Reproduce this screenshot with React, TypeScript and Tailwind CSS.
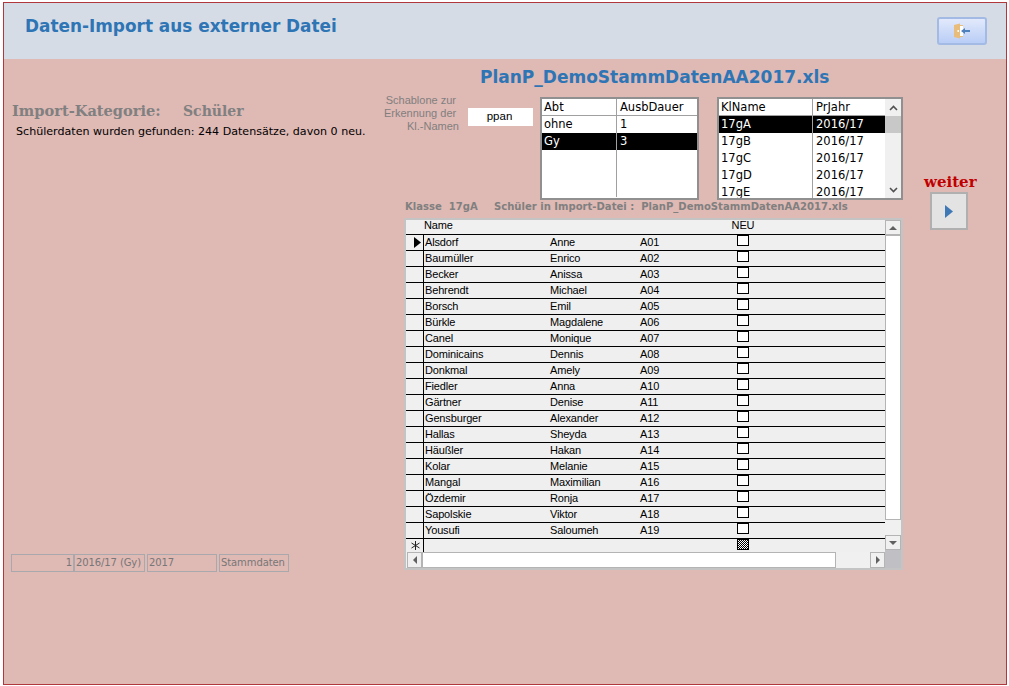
const students = [
  ["Alsdorf", "Anne", "A01"],
  ["Baumüller", "Enrico", "A02"],
  ["Becker", "Anissa", "A03"],
  ["Behrendt", "Michael", "A04"],
  ["Borsch", "Emil", "A05"],
  ["Bürkle", "Magdalene", "A06"],
  ["Canel", "Monique", "A07"],
  ["Dominicains", "Dennis", "A08"],
  ["Donkmal", "Amely", "A09"],
  ["Fiedler", "Anna", "A10"],
  ["Gärtner", "Denise", "A11"],
  ["Gensburger", "Alexander", "A12"],
  ["Hallas", "Sheyda", "A13"],
  ["Häußler", "Hakan", "A14"],
  ["Kolar", "Melanie", "A15"],
  ["Mangal", "Maximilian", "A16"],
  ["Özdemir", "Ronja", "A17"],
  ["Sapolskie", "Viktor", "A18"],
  ["Yousufi", "Saloumeh", "A19"],
];

const klassen = ["17gA", "17gB", "17gC", "17gD", "17gE"];

const Tri = ({ dir, cls = "fill-[#606060]" }: { dir: "up" | "down" | "left" | "right"; cls?: string }) => {
  const pts = {
    up: "0,6 4,2 8,6",
    down: "0,2 8,2 4,6",
    left: "6,0 6,8 2,4",
    right: "2,0 2,8 6,4",
  }[dir];
  return (
    <svg width="8" height="8" viewBox="0 0 8 8" className={cls}>
      <polygon points={pts} />
    </svg>
  );
};

const Chevron = ({ up }: { up?: boolean }) => (
  <svg width="9" height="6" viewBox="0 0 9 6" fill="none" stroke="#505050" strokeWidth="1.6">
    <path d={up ? "M1 5l3.5-3.5L8 5" : "M1 1l3.5 3.5L8 1"} />
  </svg>
);

const ScrollBtn = ({ dir, className }: { dir: "up" | "down" | "left" | "right"; className: string }) => (
  <div className={`flex shrink-0 items-center justify-center border border-[#b4b4b4] bg-[#f0f0f0] ${className}`}>
    <Tri dir={dir} />
  </div>
);

const FieldBox = ({ text, className }: { text: string; className: string }) => (
  <div className={`h-[18px] shrink-0 whitespace-nowrap border border-[#a9a9ad] px-[1px] text-[10px] leading-[15px] tracking-[-0.1px] text-[#777777] ${className}`}>
    {text}
  </div>
);

export default function App() {
  return (
    <div className="h-[686px] w-[1009px] overflow-hidden bg-white pb-[1px] pl-[3px] pr-[2px] pt-[2px] font-['DejaVu_Sans',sans-serif]">
      <div className="flex h-full flex-col border border-[#b0383c] bg-[#dfb9b4]">
        {/* Kopfbereich */}
        <div className="flex h-[56px] shrink-0 items-start justify-between bg-[#d6dce5] pl-[21px] pr-[19px]">
          <h1 className="mt-[11px] text-[16.900px] font-bold leading-[24px] text-[#2e75b6]">Daten-Import aus externer Datei</h1>
          <button className="mt-[14px] flex h-[28px] w-[50px] items-center justify-center rounded-[3px] border-2 border-[#a3bbe4] bg-gradient-to-b from-[#e2e9fb] to-[#b9cdf6]">
            <svg width="18" height="18" viewBox="0 0 18 18">
              <path d="M1 3l6-1.500 0 15-6-1.500z" fill="#e8bd7c" />
              <path d="M7 3h3v1h-3zM7 14h3v1h-3z" fill="#e8bd7c" />
              <rect x="7" y="4" width="3" height="10" fill="#ffffff" />
              <rect x="4.500" y="8" width="1.500" height="2" fill="#ffffff" />
              <path d="M17 8h-5v-2l-4 3 4 3v-2h5z" fill="#4f81bd" />
            </svg>
          </button>
        </div>

        <div className="flex flex-1">
          {/* linke Spalte */}
          <div className="flex h-[513px] w-[380px] shrink-0 flex-col pl-[7px]">
            <div className="ml-[1px] mt-[41px] flex items-baseline font-['DejaVu_Serif',serif] font-bold text-[#808080]">
              <span className="w-[171px] text-[14.600px] leading-[22px]">Import-Kategorie:</span>
              <span className="text-[14px] leading-[22px]">Schüler</span>
            </div>
            <p className="ml-[5px] mt-[2px] whitespace-nowrap text-[11.100px] leading-[16px] text-black">Schülerdaten wurden gefunden: 244 Datensätze, davon 0 neu.</p>
            <div className="mt-auto flex items-start">
              <FieldBox text="1" className="w-[63px] text-right" />
              <FieldBox text="2016/17 (Gy)" className="w-[71px]" />
              <FieldBox text="2017" className="ml-[2px] w-[70px]" />
              <FieldBox text="Stammdaten" className="ml-[2px] w-[70px]" />
            </div>
          </div>

          {/* mittlere Spalte */}
          <div className="flex w-[519px] shrink-0 flex-col">
            <h2 className="ml-[96px] mt-[6px] h-[24px] whitespace-nowrap text-[17px] font-bold leading-[24px] text-[#2e75b6]">PlanP_DemoStammDatenAA2017.xls</h2>
            <div className="mt-[8px] flex items-start">
              <div className="mt-[-3px] w-[75px] shrink-0 whitespace-nowrap text-right font-['Liberation_Sans',sans-serif] text-[11px] leading-[13px] text-[#7f7f7f]">
                <div className="pr-[3px]">Schablone zur</div>
                <div className="pr-[3px]">Erkennung der</div>
                <div>Kl.-Namen</div>
              </div>
              <div className="ml-[9px] mt-[11px] flex h-[18px] w-[65px] shrink-0 items-center justify-center bg-white pr-[2px] font-['Liberation_Sans',sans-serif] text-[11.500px]">ppan</div>

              <div className="ml-[7px] h-[103px] w-[159px] shrink-0 border-2 border-[#909090] bg-white text-[11.500px] leading-[17px]">
                <div className="flex h-[17px] border-b border-[#a0a0a0]">
                  <div className="w-[75px] border-r border-[#a0a0a0] pl-[2px]">Abt</div>
                  <div className="pl-[3px]">AusbDauer</div>
                </div>
                <div className="flex h-[17px]">
                  <div className="w-[75px] border-r border-[#a0a0a0] pl-[2px]">ohne</div>
                  <div className="pl-[3px]">1</div>
                </div>
                <div className="flex h-[17px] bg-black text-white">
                  <div className="w-[75px] border-r border-[#a0a0a0] pl-[2px]">Gy</div>
                  <div className="pl-[3px]">3</div>
                </div>
                <div className="h-[47px] w-[75px] border-r border-[#a0a0a0]" />
              </div>

              <div className="ml-[18px] flex h-[103px] w-[186px] shrink-0 overflow-hidden border-2 border-[#909090] bg-white text-[11.500px] leading-[17px]">
                <div className="w-[166px] shrink-0">
                  <div className="flex h-[17px] border-b border-[#a0a0a0]">
                    <div className="w-[94px] border-r border-[#a0a0a0] pl-[2px]">KlName</div>
                    <div className="pl-[3px]">PrJahr</div>
                  </div>
                  {klassen.map((k, i) => (
                    <div key={k} className={`flex h-[17px] ${i === 0 ? "bg-black text-white" : ""}`}>
                      <div className="w-[94px] border-r border-[#a0a0a0] pl-[2px]">{k}</div>
                      <div className="pl-[3px]">2016/17</div>
                    </div>
                  ))}
                </div>
                <div className="flex w-[16px] shrink-0 flex-col bg-[#f0f0f0]">
                  <div className="flex h-[17px] items-center justify-center"><Chevron up /></div>
                  <div className="h-[17px] bg-[#c8c8c8]" />
                  <div className="flex-1" />
                  <div className="flex h-[14px] items-center justify-center pb-[2px]"><Chevron /></div>
                </div>
              </div>
            </div>

            <div className="ml-[21px] flex h-[18px] items-start whitespace-pre text-[10.050px] font-bold leading-[14px] text-[#808080]">
              <span className="w-[89px]">Klasse  17gA</span>
              <span>Schüler in Import-Datei :  PlanP_DemoStammDatenAA2017.xls</span>
            </div>

            {/* Schüler-Tabelle */}
            <div className="ml-[20px] flex h-[352px] w-[499px] border-2 border-[#c4c4c4] bg-[#f0f0f0] font-['Liberation_Sans',sans-serif] text-[11px] tracking-[-0.15px]">
              <div className="flex w-[479px] shrink-0 flex-col">
                <div className="flex h-[14px] shrink-0 bg-[#f0f0f0] leading-[11px]">
                  <div className="w-[18px] shrink-0" />
                  <div className="w-[307px] shrink-0">Name</div>
                  <div className="w-[24px] text-center">NEU</div>
                </div>
                {students.map(([name, first, code], i) => (
                  <div key={code} className="flex h-[16px] shrink-0 border-t border-black bg-[#efefef] leading-[15px]">
                    <div className="flex w-[18px] shrink-0 items-center justify-end border-r border-black bg-[#f0f0f0] pr-[1px]">
                      {i === 0 && (
                        <svg width="8" height="11" viewBox="0 0 8 11"><polygon points="0,0 7,5.500 0,11" fill="#000000" /></svg>
                      )}
                    </div>
                    <div className="w-[126px] shrink-0 pl-[1px]">{name}</div>
                    <div className="w-[90px] shrink-0">{first}</div>
                    <div className="w-[97px] shrink-0">{code}</div>
                    <div className="h-[11px] w-[12px] border border-black bg-white" />
                  </div>
                ))}
                <div className="flex h-[14px] shrink-0 border-t border-black bg-[#efefef]">
                  <div className="flex w-[18px] shrink-0 items-center justify-end border-r border-black pr-[3px]">
                    <svg width="9" height="9" viewBox="0 0 9 9" stroke="#202020" strokeWidth="1">
                      <path d="M4.500 0v9M0.500 2l8 5M8.500 2l-8 5" />
                    </svg>
                  </div>
                  <div className="ml-[313px] h-[11px] w-[12px] border border-black bg-[repeating-conic-gradient(#000000_0_25%,#ffffff_0_50%)] bg-[length:2px_2px]" />
                </div>
                <div className="flex h-[16px] shrink-0 items-stretch pl-[1px]">
                  <ScrollBtn dir="left" className="w-[15px]" />
                  <div className="w-[414px] border border-[#b4b4b4] bg-white" />
                  <div className="flex-1" />
                  <ScrollBtn dir="right" className="w-[15px]" />
                </div>
              </div>
              <div className="flex w-[16px] shrink-0 flex-col">
                <ScrollBtn dir="up" className="h-[15px]" />
                <div className="h-[285px] shrink-0 border border-[#b4b4b4] bg-white" />
                <div className="h-[15px] shrink-0" />
                <ScrollBtn dir="down" className="h-[15px]" />
                <div className="flex-1 bg-[#c0c0c4]" />
              </div>
            </div>
          </div>

          {/* weiter */}
          <div className="ml-[21px] flex flex-col items-start pt-[113px]">
            <span className="font-['DejaVu_Serif',serif] text-[15px] font-bold leading-[20px] text-[#c00000]">weiter</span>
            <button className="ml-[6px] flex h-[38px] w-[38px] items-center justify-center border-2 border-[#b0b0b0] bg-[#e3e3e3]">
              <svg width="9" height="13" viewBox="0 0 9 13"><polygon points="0,0 8,6.500 0,13" fill="#3f79b5" /></svg>
            </button>
          </div>
        </div>
      </div>
    </div>
  );
}
